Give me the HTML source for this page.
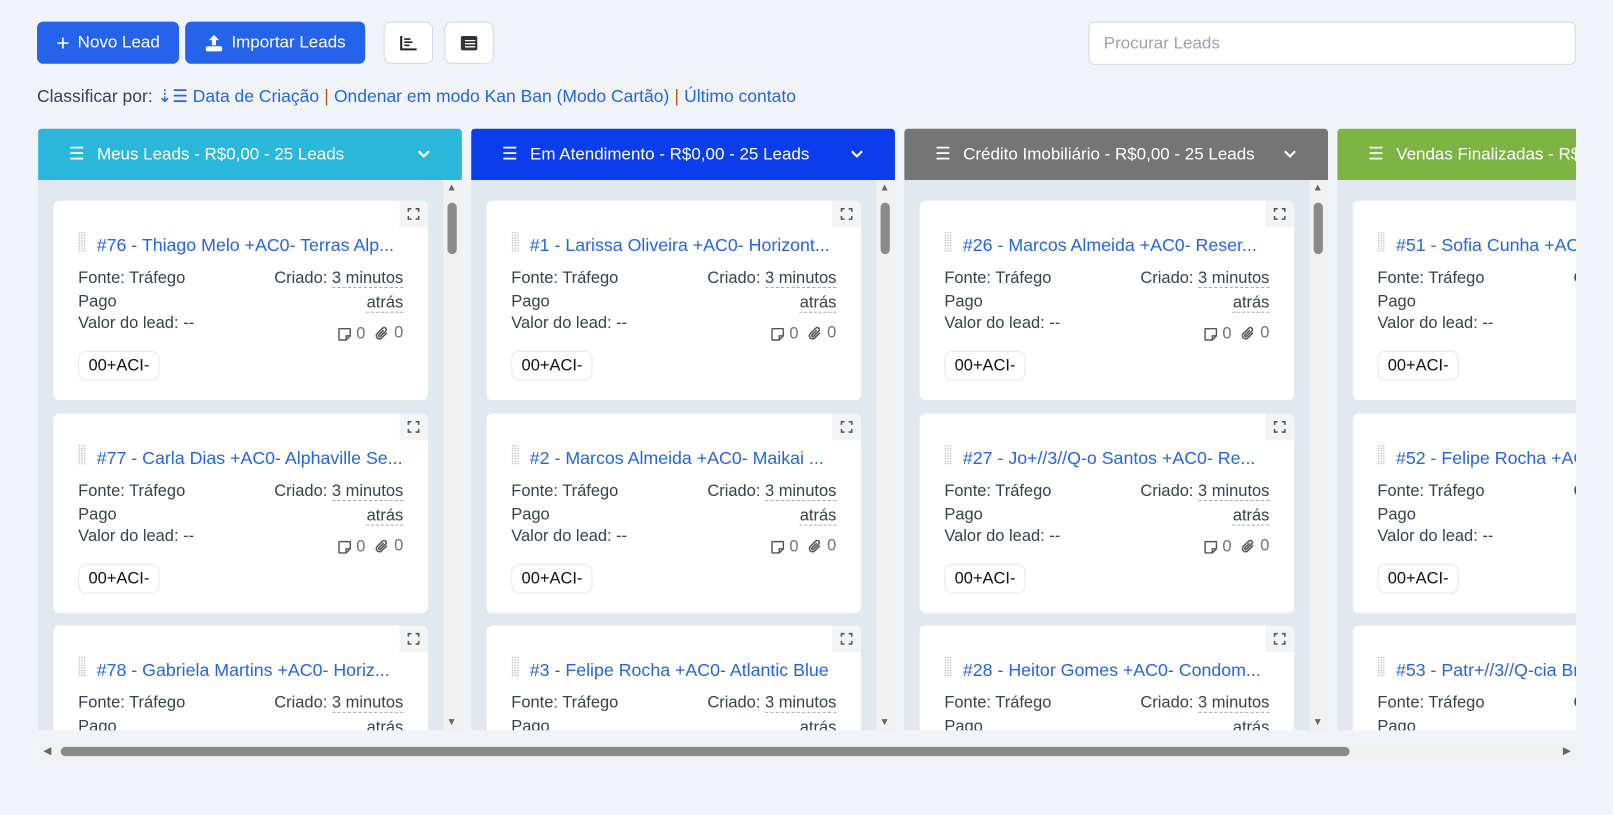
<!DOCTYPE html>
<html><head><meta charset="utf-8"><style>
*{box-sizing:border-box;margin:0;padding:0}
body{width:1613px;height:815px;background:#f0f4f9;font-family:"Liberation Sans",sans-serif;color:#374151;overflow:hidden;font-size:15px}
#root{position:relative;width:1568px;height:792px;transform:scale(1.0287);transform-origin:0 0}
.btn{position:absolute;top:21px;height:41px;background:#2563eb;color:#fff;border-radius:6px;font-size:16.5px;display:flex;align-items:center;justify-content:center;gap:8px}
.ib{position:absolute;top:21px;width:48px;height:41px;background:#fff;border:1px solid #d1d9e6;border-radius:7px;display:flex;align-items:center;justify-content:center}
.search{position:absolute;left:1058px;top:21px;width:474px;height:42px;background:#fff;border:1px solid #d1d9e6;border-radius:6px;padding:11px 14px;color:#9ca3af;font-size:16.5px}
.sort{position:absolute;left:36px;top:84px;font-size:17px}
.sort a{color:#2563eb}
.sep{color:#b45309;margin:0 5px}
.wrap{position:absolute;left:37px;top:125px;width:1495px;height:585px;overflow:hidden}
.col{position:absolute;top:0;width:412px;height:585px;background:#e2e8f0;border-radius:4px 4px 0 0;overflow:hidden}
.hd{height:50px;color:#fff;font-size:16.5px;display:flex;align-items:center;padding-left:30px;position:relative;white-space:nowrap}
.hd .chev{position:absolute;right:30px;top:18px}
.sb{position:absolute;right:0;top:50px;width:18px;height:535px;background:#f1f1f1}
.sb .th{position:absolute;left:4px;top:22px;width:9px;height:50px;background:#8a8a8a;border-radius:5px}
.card{position:absolute;left:15px;width:364px;height:194px;background:#fff;border-radius:6px}
.ex{position:absolute;right:0;top:0;width:28px;height:26px;background:#f3f4f6;border-radius:0 6px 0 0}
.tt{position:absolute;left:42px;top:33px;color:#2563eb;font-size:17.3px;white-space:nowrap;width:310px;overflow:hidden}
.dots{position:absolute;left:24px;top:30px;width:7px;height:20px;background-image:radial-gradient(#bbb 0.6px,transparent 0.8px);background-size:2.5px 2.5px}
.l{position:absolute;left:24px;font-size:16px}
.r{position:absolute;right:24px;font-size:16px;text-align:right}
.u{border-bottom:1px dashed #aaa;color:#374151}
.tag{position:absolute;left:24px;top:146px;height:29px;padding:0 9px;border:1px solid #e5e7eb;border-radius:8px;font-size:16px;line-height:27px;color:#111}
.hs{position:absolute;left:37px;top:722px;width:1495px;height:18px;background:#f1f1f1}
.hs .th{position:absolute;left:22px;top:4px;width:1253px;height:9px;background:#8a8a8a;border-radius:5px}
.ic{display:inline-flex;align-items:center;gap:4px;color:#6b7280}
</style></head><body><div id="root">
<div class="btn" style="left:36px;width:138px"><span style="font-size:22px;font-weight:300">+</span>Novo Lead</div>
<div class="btn" style="left:180px;width:175px"><svg width="18" height="18" viewBox="0 0 18 18" fill="#fff"><path d="M9 1l5 5h-3v5H7V6H4z"/><rect x="1" y="12" width="16" height="5" rx="2"/></svg>Importar Leads</div>
<div class="ib" style="left:373px"><svg width="18" height="16"><path d="M2 1v13h15" stroke="#222" stroke-width="2" fill="none"/><path d="M5 4h6M5 7h8M5 10h5" stroke="#222" stroke-width="1.6"/></svg></div>
<div class="ib" style="left:432px"><svg width="18" height="16"><rect x="1" y="1" width="16" height="14" rx="2" fill="#333"/><path d="M5 5.5h10M5 8.5h10M5 11.5h10" stroke="#fff" stroke-width="1.3"/></svg></div>
<div class="search">Procurar Leads</div>
<div class="sort">Classificar por: <a>⇣☰ Data de Criação</a><span class="sep">|</span><a>Ondenar em modo Kan Ban (Modo Cartão)</a><span class="sep">|</span><a>Último contato</a></div>
<div class="wrap"></div>
<div class="hs"><div class="th"></div><span style="position:absolute;left:5px;top:3px;font-size:10px;color:#666">◀</span><span style="position:absolute;right:5px;top:3px;font-size:10px;color:#666">▶</span></div>
</div>
<script>
var cols=[["#2ab7da","Meus Leads - R$0,00 - 25 Leads",["#76 - Thiago Melo +AC0- Terras Alp...","#77 - Carla Dias +AC0- Alphaville Se...","#78 - Gabriela Martins +AC0- Horiz..."]],
["#0b3ded","Em Atendimento - R$0,00 - 25 Leads",["#1 - Larissa Oliveira +AC0- Horizont...","#2 - Marcos Almeida +AC0- Maikai ...","#3 - Felipe Rocha +AC0- Atlantic Blue"]],
["#757575","Crédito Imobiliário - R$0,00 - 25 Leads",["#26 - Marcos Almeida +AC0- Reser...","#27 - Jo+//3//Q-o Santos +AC0- Re...","#28 - Heitor Gomes +AC0- Condom..."]],
["#7cb342","Vendas Finalizadas - R$0,00 - 25 Leads",["#51 - Sofia Cunha +AC0- Alphaville","#52 - Felipe Rocha +AC0- Reserva","#53 - Patr+//3//Q-cia Brito +AC0-"]]];
var note='<svg width="14" height="14" viewBox="0 0 14 14"><path d="M2 1.5h10a.5.5 0 0 1 .5.5v6.5l-4 4H2a.5.5 0 0 1-.5-.5V2a.5.5 0 0 1 .5-.5zM12.5 8.5h-4v4" stroke="#555" stroke-width="1.4" fill="none"/></svg>';
var clip='<svg width="15" height="15" viewBox="0 0 15 15"><path d="M12 6.5L7 11.5a3 3 0 0 1-4.3-4.3L8 2a2 2 0 0 1 2.9 2.9L5.7 10a1 1 0 0 1-1.4-1.4L9 4" stroke="#555" stroke-width="1.5" fill="none"/></svg>';
var h="";cols.forEach(function(c,i){h+='<div class="col" style="left:'+(i*421)+'px"><div class="hd" style="background:'+c[0]+'"><span style="margin-right:12px;font-size:17px">☰</span>'+c[1]+'<svg class="chev" width="14" height="14"><path d="M2 4l5 5 5-5" stroke="#fff" stroke-width="2" fill="none"/></svg></div>';
[70,277,483].forEach(function(t,j){h+='<div class="card" style="top:'+t+'px"><div class="ex"><svg width="28" height="26"><path d="M9 11V8h3M16 8h3v3M19 15v3h-3M12 18H9v-3" stroke="#555" stroke-width="1.5" fill="none"/></svg></div><div class="dots"></div><div class="tt">'+c[2][j]+'</div><div class="l" style="top:67px">Fonte: Tráfego</div><div class="l" style="top:90px">Pago</div><div class="l" style="top:111px">Valor do lead: --</div><div class="r" style="top:67px">Criado: <span class="u">3 minutos</span></div><div class="r" style="top:91px"><span class="u">atrás</span></div><div class="r" style="top:120px"><span class="ic">'+note+'0</span>&nbsp;&nbsp;<span class="ic">'+clip+'0</span></div><div class="tag">00+ACI-</div></div>';});
h+='<div class="sb"><span style="position:absolute;left:3px;top:2px;font-size:10px;color:#666">▲</span><div class="th"></div><span style="position:absolute;left:3px;bottom:2px;font-size:10px;color:#666">▼</span></div></div>';});
document.querySelector('.wrap').innerHTML=h;
</script>
</body></html>
